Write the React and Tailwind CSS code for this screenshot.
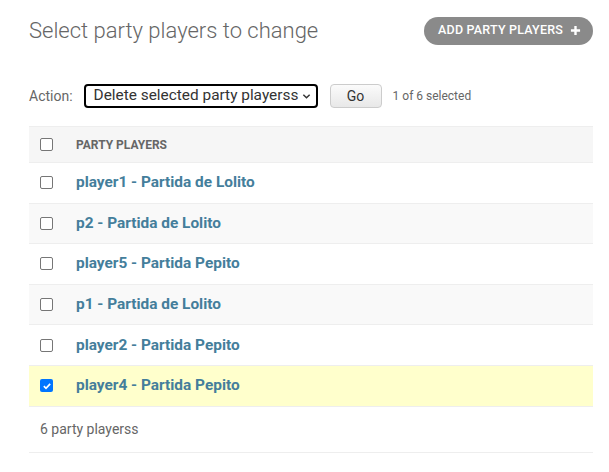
const rows = [
  { label: "player1 - Partida de Lolito", checked: false },
  { label: "p2 - Partida de Lolito", checked: false },
  { label: "player5 - Partida Pepito", checked: false },
  { label: "p1 - Partida de Lolito", checked: false },
  { label: "player2 - Partida Pepito", checked: false },
  { label: "player4 - Partida Pepito", checked: true },
];

function Box({ checked }) {
  if (checked) {
    return (
      <span className="flex h-[13px] w-[13px] items-center justify-center rounded-[2px] bg-[#0075ff]">
        <svg viewBox="0 0 12 12" className="h-[10px] w-[10px]">
          <path d="M2.2 6.2 4.8 8.8 9.8 3.4" fill="none" stroke="white" strokeWidth="2" />
        </svg>
      </span>
    );
  }
  return <span className="block h-[13px] w-[13px] rounded-[2px] border border-[#767676] bg-white" />;
}

export default function App() {
  return (
    <div className="min-h-[472px] bg-white pl-[29px] pr-[16px] pt-[14px] font-['Roboto',sans-serif] text-[#333]">
      <div className="flex items-center justify-between">
        <h1 className="text-[22px] font-light text-[#666]">Select party players to change</h1>
        <button className="flex h-[28px] items-center gap-[7px] rounded-full bg-[#8a8a8a] pl-[14px] pr-[12px] text-[12.5px] font-medium tracking-[0.2px] text-white">
          ADD PARTY PLAYERS
          <svg viewBox="0 0 12 12" className="h-[11px] w-[11px]">
            <path d="M6 1v10M1 6h10" stroke="white" strokeWidth="2.6" />
          </svg>
        </button>
      </div>

      <div className="mt-[37px] flex items-center text-[13px] text-[#666]">
        <span className="text-[14px]">Action:</span>
        <div className="ml-[11px] flex h-[24px] w-[234px] items-center justify-between rounded-[4px] border-2 border-black pl-[8px] pr-[5px] text-[15.4px] text-[#333]">
          Delete selected party playerss
          <svg viewBox="0 0 10 10" className="h-[9px] w-[9px]">
            <path d="M1.5 3 5 6.5 8.5 3" fill="none" stroke="#333" strokeWidth="1.6" />
          </svg>
        </div>
        <button className="ml-[12px] h-[24px] w-[52px] rounded-[4px] border border-[#ccc] bg-gradient-to-b from-[#fbfbfb] to-[#e8e8e8] text-[14px] text-[#333]">
          Go
        </button>
        <span className="ml-[11px] text-[12px]">1 of 6 selected</span>
      </div>

      <div className="mt-[18px]">
        <div className="flex h-[37px] items-center border-y border-[#eee] bg-[#f6f6f6]">
          <span className="ml-[11px]"><Box /></span>
          <span className="ml-[23px] text-[12px] font-bold text-[#666]">PARTY PLAYERS</span>
        </div>
        {rows.map((r, i) => (
          <div
            key={r.label}
            className={
              "flex h-[40.6px] items-center border-b border-[#eee] " +
              (r.checked ? "bg-[#ffc]" : i % 2 === 1 ? "bg-[#f9f9f9]" : "bg-white")
            }
          >
            <span className="ml-[11px]"><Box checked={r.checked} /></span>
            <a className="ml-[23px] text-[15.4px] font-bold text-[#447e9b]">{r.label}</a>
          </div>
        ))}
        <div className="flex h-[46px] items-center border-b border-[#eee] pl-[11px] text-[14px] text-[#666]">
          6 party playerss
        </div>
      </div>
    </div>
  );
}
